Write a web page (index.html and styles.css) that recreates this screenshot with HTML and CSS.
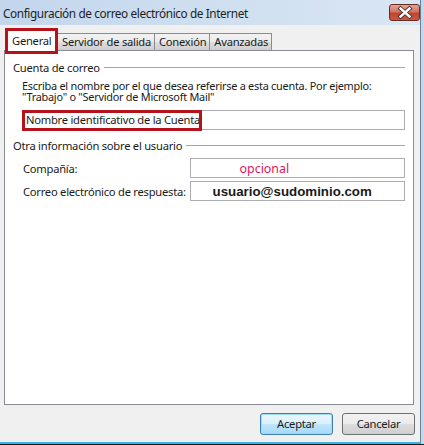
FILE: index.html
```html
<!DOCTYPE html>
<html lang="es">
<head>
<meta charset="utf-8">
<title>Configuración de correo electrónico de Internet</title>
<link rel="stylesheet" href="styles.css">
</head>
<body>
<div class="frame">
  <div class="window">
    <div class="titlebar">
      <span class="title">Configuración de correo electrónico de Internet</span>
      <div class="close">
        <svg width="30" height="17" viewBox="0 0 30 17">
          <path d="M10.5 4.5 L19.5 12.5 M19.5 4.5 L10.5 12.5" stroke="#4a3030" stroke-width="4.2" stroke-linecap="square" fill="none"/>
          <path d="M10.5 4.5 L19.5 12.5 M19.5 4.5 L10.5 12.5" stroke="#ffffff" stroke-width="2.4" stroke-linecap="square" fill="none"/>
        </svg>
      </div>
    </div>
    <div class="client">
      <div class="tabs">
        <div class="tab active">General<span class="mark mark-tab"></span></div>
        <div class="tab">Servidor de salida</div>
        <div class="tab">Conexión</div>
        <div class="tab">Avanzadas</div>
      </div>
      <div class="panel">
        <div class="group">
          <span class="group-label">Cuenta de correo</span>
          <span class="group-line"></span>
        </div>
        <div class="desc">
          <div class="desc-line">Escriba el nombre por el que desea referirse a esta cuenta. Por ejemplo:</div>
          <div class="desc-line">"Trabajo" o "Servidor de Microsoft Mail"</div>
        </div>
        <div class="input name-input"><span class="name-text">Nombre identificativo de la Cuenta</span><span class="caret"></span><span class="mark mark-input"></span></div>

        <div class="group group2">
          <span class="group-label">Otra información sobre el usuario</span>
          <span class="group-line"></span>
        </div>
        <div class="row first-row">
          <span class="row-label">Compañía:</span>
          <div class="input field"><span class="optional">opcional</span></div>
        </div>
        <div class="row">
          <span class="row-label">Correo electrónico de respuesta:</span>
          <div class="input field"><span class="email">usuario@sudominio.com</span></div>
        </div>
      </div>
      <div class="buttons">
        <div class="btn default">Aceptar</div>
        <div class="btn">Cancelar</div>
      </div>
    </div>
  </div>
</div>
</body>
</html>
```
FILE: styles.css
```css
html, body {
  margin: 0;
  padding: 0;
}
body {
  width: 424px;
  height: 445px;
  overflow: hidden;
  background: #c4d9ee;
  font-family: "Noto Sans", "Open Sans", sans-serif;
  font-size: 11px;
  letter-spacing: -0.25px;
  color: #1a1a1a;
}
.frame {
  width: 424px;
  height: 445px;
  box-sizing: border-box;
  border-bottom: 1px solid #1a1a1a;
}
.window {
  width: 421px;
  height: 444px;
  box-sizing: border-box;
  border-right: 1px solid #6b7f94;
  border-bottom: 2px solid #3ab2e3;
  display: flex;
  flex-direction: column;
}
.titlebar {
  height: 25px;
  flex: none;
  background: linear-gradient(90deg, #c2d6ec 0%, #cfdff0 50%, #d9e6f4 100%);
  display: flex;
  align-items: flex-start;
  justify-content: space-between;
}
.title {
  font-size: 11.8px;
  letter-spacing: -0.4px;
  line-height: 26px;
  padding-left: 3px;
  color: #1e1e1e;
  white-space: nowrap;
}
.close {
  width: 31px;
  height: 17px;
  margin-top: 4px;
  box-sizing: border-box;
  border: 1px solid #6a2a24;
  border-radius: 3px;
  background: linear-gradient(180deg, #e4a596 0%, #d27462 45%, #c0442f 55%, #c95a42 100%);
  display: flex;
  align-items: center;
  justify-content: center;
  overflow: hidden;
}
.close svg {
  display: block;
  flex: none;
}
.client {
  flex: 1;
  background: #f0f0f0;
  padding: 7px 0 0 4px;
  display: flex;
  flex-direction: column;
}
.tabs {
  display: flex;
  align-items: flex-end;
  height: 18px;
  padding-left: 2px;
  position: relative;
  z-index: 1;
}
.tab {
  position: relative;
  height: 17px;
  box-sizing: border-box;
  border: 1px solid #898c95;
  border-bottom: none;
  margin-right: -1px;
  padding: 0 3px 0 4px;
  line-height: 16px;
  font-size: 11.2px;
  white-space: nowrap;
  background: linear-gradient(180deg, #f2f2f2 0%, #ebebeb 50%, #dddddd 51%, #cfcfcf 100%);
  color: #1a1a1a;
}
.tab.active {
  height: 21px;
  width: 51px;
  background: #ffffff;
  padding: 0 0 0 5px;
  line-height: 20px;
  margin-bottom: -1px;
  z-index: 2;
  margin-right: 0;
}
.mark {
  position: absolute;
  border: 3px solid #b5121b;
  box-sizing: border-box;
  pointer-events: none;
}
.mark-tab {
  left: -2px;
  top: -3px;
  width: 53px;
  height: 26px;
}
.panel {
  width: 410px;
  height: 355px;
  box-sizing: border-box;
  border: 1px solid #898c95;
  background: #ffffff;
  padding: 8px 8px 0 8px;
}
.group {
  display: flex;
  align-items: center;
  height: 16px;
}
.group-label {
  font-size: 11.2px;
  padding-right: 4px;
  white-space: nowrap;
}
.group-line {
  flex: 1;
  border-top: 1px solid #a5a5a5;
  margin-top: 1px;
}
.desc {
  margin: 5px 0 0 9px;
  font-size: 10.9px;
}
.desc-line {
  height: 11px;
  line-height: 11px;
  white-space: nowrap;
}
.input {
  position: relative;
  box-sizing: border-box;
  border: 1px solid #abadb3;
  background: #ffffff;
  height: 20px;
}
.name-input {
  margin: 8px 0 0 9px;
  font-size: 11.2px;
  line-height: 18px;
  padding-left: 3px;
  display: flex;
  align-items: center;
}
.name-text {
  white-space: nowrap;
}
.caret {
  display: inline-block;
  width: 1px;
  height: 13px;
  background: #000;
  margin-left: 1px;
}
.mark-input {
  left: -1px;
  top: -1px;
  width: 180px;
  height: 21px;
}
.group2 {
  margin-top: 7px;
}
.row {
  display: flex;
  align-items: center;
  margin-top: 3px;
  padding-left: 10px;
}
.first-row {
  margin-top: 5px;
}
.row-label {
  width: 167px;
  font-size: 11.2px;
  white-space: nowrap;
}
.field {
  width: 216px;
  height: 20px;
  display: flex;
  align-items: center;
}
.optional {
  margin-left: 49px;
  font-size: 12.4px;
  letter-spacing: 0;
  color: #e0165c;
}
.email {
  margin-left: 22px;
  font-family: "Liberation Sans", Arial, sans-serif;
  font-weight: bold;
  font-size: 13.3px;
  letter-spacing: 0;
  color: #1a1a1a;
}
.buttons {
  display: flex;
  justify-content: flex-end;
  gap: 9px;
  margin-top: 8px;
  padding-right: 5px;
}
.btn {
  width: 73px;
  height: 22px;
  box-sizing: border-box;
  border: 1px solid #707070;
  border-radius: 3px;
  background: linear-gradient(180deg, #f2f2f2 0%, #ebebeb 50%, #dddddd 51%, #cfcfcf 100%);
  font-size: 11.2px;
  line-height: 20px;
  text-align: center;
  color: #1a1a1a;
}
.btn.default {
  border-color: #3c7fb1;
  box-shadow: inset 0 0 0 1px #9fdcf7;
  background: linear-gradient(180deg, #eaf6fd 0%, #d9f0fc 50%, #bee6fd 51%, #a7d9f5 100%);
}
```
